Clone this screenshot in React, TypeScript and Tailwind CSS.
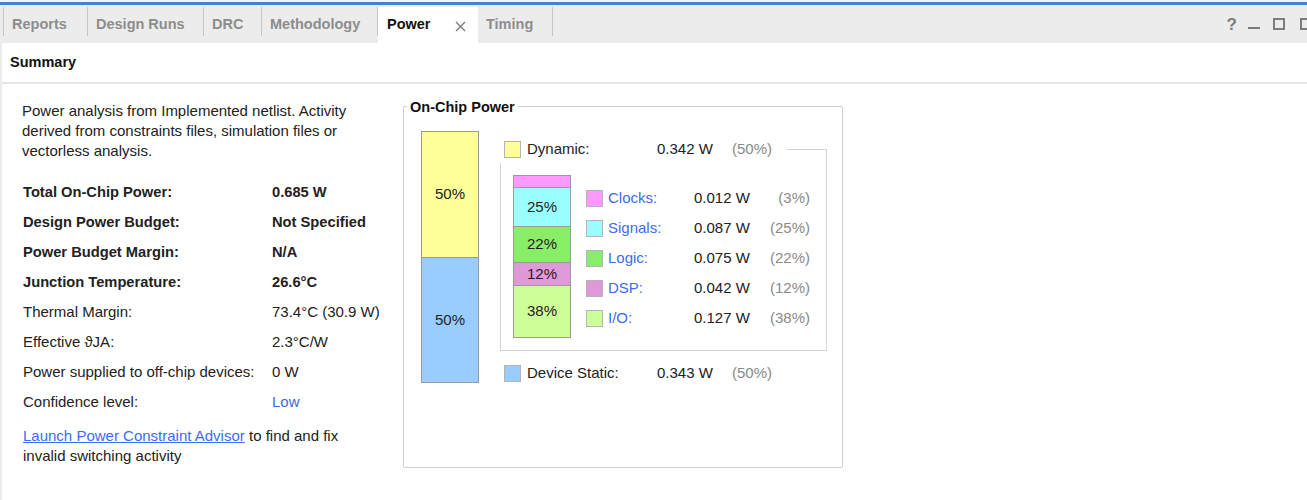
import React from 'react';

const Sep = () => <div className="w-px bg-[#c6c6c6] mt-[2px] mb-[7px] shrink-0" />;

const Tab = ({ label, w }: { label: string; w: string }) => (
  <div className={`${w} shrink-0 flex items-center pl-[8px] pt-[2px] text-[14.5px] font-bold text-[#8d8d8d]`}>{label}</div>
);

const Swatch = ({ color }: { color: string }) => (
  <div className={`w-[17px] h-[17px] border border-[#b4b4b4] shrink-0 ${color}`} />
);

const LegendRow = ({ color, label, value, pct }: { color: string; label: string; value: string; pct: string }) => (
  <div className="h-[30px] flex items-center">
    <Swatch color={color} />
    <span className="ml-[5px] w-[86px] text-[#3b6cf2]">{label}</span>
    <span className="w-[75px] text-[#222]">{value}</span>
    <span className="w-[41px] text-right text-[#8a8a8a]">{pct}</span>
  </div>
);

const InfoRow = ({ label, value, bold, valueClass }: { label: string; value: string; bold?: boolean; valueClass?: string }) => (
  <div className={`h-[30px] flex items-center ${bold ? 'font-bold text-[14.7px]' : ''}`}>
    <span className="w-[250px] pl-px">{label}</span>
    <span className={valueClass ?? ''}>{value}</span>
  </div>
);

export default function App() {
  return (
    <div className="w-[1307px] h-[500px] overflow-hidden bg-white font-['Liberation_Sans',Arial,sans-serif] text-[15px] text-[#222] flex flex-col">
      <div className="h-[2px] bg-[#f4f4f4]" />
      <div className="h-[3px] bg-[#4a7dd6]" />
      {/* tab bar */}
      <div className="h-[38px] bg-[#ececec] flex items-stretch">
        <div className="w-[3px] shrink-0" />
        <Sep />
        <Tab label="Reports" w="w-[83px]" />
        <Sep />
        <Tab label="Design Runs" w="w-[115px]" />
        <Sep />
        <Tab label="DRC" w="w-[57px]" />
        <Sep />
        <Tab label="Methodology" w="w-[115px]" />
        <Sep />
        <div className="w-[100px] shrink-0 bg-white mt-[2px] flex items-center pl-[9px] text-[14.5px] font-bold text-[#111]">
          <span>Power</span>
          <svg className="ml-[24px] mt-[2px]" width="11" height="11" viewBox="0 0 11 11">
            <path d="M1 1L10 10M10 1L1 10" stroke="#7a7a7a" strokeWidth="1.3" />
          </svg>
        </div>
        <Tab label="Timing" w="w-[74px]" />
        <Sep />
        <div className="ml-auto flex items-center mr-[-7px] text-[#7c7c7c]">
          <span className="font-bold text-[17px] leading-none mt-[1px]">?</span>
          <svg className="ml-[11px] mt-[8px]" width="12" height="3" viewBox="0 0 12 3">
            <rect x="0" y="0" width="12" height="2" fill="#7c7c7c" />
          </svg>
          <svg className="ml-[13px]" width="12" height="12" viewBox="0 0 12 12">
            <rect x="1" y="1" width="10" height="10" fill="none" stroke="#7c7c7c" strokeWidth="2" />
          </svg>
          <svg className="ml-[15px]" width="14" height="12" viewBox="0 0 14 12">
            <path d="M7 1H1V11H13V6" fill="none" stroke="#7c7c7c" strokeWidth="2" />
            <path d="M9 1H13V5" fill="none" stroke="#7c7c7c" strokeWidth="1.5" />
          </svg>
        </div>
      </div>
      {/* body */}
      <div className="flex-1 flex flex-col border-l-2 border-[#ececec]">
        <div className="h-[41px] border-b-2 border-[#e6e6e6] flex items-center pl-[8px] font-bold text-[14.5px] text-[#111] pt-[1px]">
          Summary
        </div>
        <div className="flex-1 flex pl-[20px]">
          {/* left column */}
          <div className="w-[381px] shrink-0 pt-[17px]">
            <p className="leading-[20px]">
              Power analysis from Implemented netlist. Activity<br />
              derived from constraints files, simulation files or<br />
              vectorless analysis.
            </p>
            <div className="mt-[16px]">
              <InfoRow bold label="Total On-Chip Power:" value="0.685 W" />
              <InfoRow bold label="Design Power Budget:" value="Not Specified" />
              <InfoRow bold label="Power Budget Margin:" value="N/A" />
              <InfoRow bold label="Junction Temperature:" value="26.6°C" />
              <InfoRow label="Thermal Margin:" value="73.4°C (30.9 W)" />
              <InfoRow label="Effective ϑJA:" value="2.3°C/W" />
              <InfoRow label="Power supplied to off-chip devices:" value="0 W" />
              <InfoRow label="Confidence level:" value="Low" valueClass="text-[#3b6cdb]" />
            </div>
            <p className="mt-[9px] leading-[20px] pl-px">
              <span className="text-[#3b6cf2] underline">Launch Power Constraint Advisor</span> to find and fix<br />
              invalid switching activity
            </p>
          </div>
          {/* on-chip power fieldset */}
          <div className="mt-[22px] w-[440px] h-[362px] shrink-0 border border-[#cfcfcf] rounded-[2px] relative">
            <div className="absolute left-[3px] top-[-8px] bg-white px-[3px] font-bold text-[14.5px] leading-[16px] text-[#111]">
              On-Chip Power
            </div>
            <div className="flex items-start pt-[24px] pl-[17px]">
              {/* big bar */}
              <div className="w-[58px] h-[252px] border border-[#9a9a9a] flex flex-col shrink-0">
                <div className="h-[125px] bg-[#ffff99] flex items-center justify-center">50%</div>
                <div className="flex-1 border-t border-[#9a9a9a] bg-[#99ccff] flex items-center justify-center">50%</div>
              </div>
              {/* right part */}
              <div className="ml-[21px] w-[327px] flex flex-col">
                <div className="mt-[9px] h-[23px] flex items-start ml-[4px]">
                  <div className="mt-px"><Swatch color="bg-[#ffff99]" /></div>
                  <span className="ml-[6px] w-[130px] leading-[18px]">Dynamic:</span>
                  <span className="w-[75px] leading-[18px]">0.342 W</span>
                  <span className="w-[55px] leading-[18px] text-[#8a8a8a]">(50%)</span>
                  <div className="flex-1 self-stretch mt-[9px] border-t border-r border-[#d4d4d4]" />
                </div>
                <div className="h-[188px] border-l border-r border-b border-[#d4d4d4] flex items-start pl-[12px] pt-[12px]">
                  <div className="w-[58px] h-[163px] border border-[#9a9a9a] flex flex-col shrink-0 text-[#222]">
                    <div className="h-[11px] bg-[#ff99ff]" />
                    <div className="h-[39px] border-t border-[#9a9a9a] bg-[#99ffff] flex items-center justify-center">25%</div>
                    <div className="h-[36px] border-t border-[#9a9a9a] bg-[#88ee66] flex items-center justify-center">22%</div>
                    <div className="h-[23px] border-t border-[#9a9a9a] bg-[#e099d8] flex items-center justify-center">12%</div>
                    <div className="flex-1 border-t border-[#9a9a9a] bg-[#ccff99] flex items-center justify-center">38%</div>
                  </div>
                  <div className="ml-[15px] mt-[8px] flex flex-col">
                    <LegendRow color="bg-[#ff99ff]" label="Clocks:" value="0.012 W" pct="(3%)" />
                    <LegendRow color="bg-[#99ffff]" label="Signals:" value="0.087 W" pct="(25%)" />
                    <LegendRow color="bg-[#88ee66]" label="Logic:" value="0.075 W" pct="(22%)" />
                    <LegendRow color="bg-[#e099d8]" label="DSP:" value="0.042 W" pct="(12%)" />
                    <LegendRow color="bg-[#ccff99]" label="I/O:" value="0.127 W" pct="(38%)" />
                  </div>
                </div>
                <div className="mt-[13px] h-[18px] flex items-center ml-[4px]">
                  <Swatch color="bg-[#99ccff]" />
                  <span className="ml-[6px] w-[130px]">Device Static:</span>
                  <span className="w-[75px]">0.343 W</span>
                  <span className="text-[#8a8a8a]">(50%)</span>
                </div>
              </div>
            </div>
          </div>
        </div>
      </div>
    </div>
  );
}
